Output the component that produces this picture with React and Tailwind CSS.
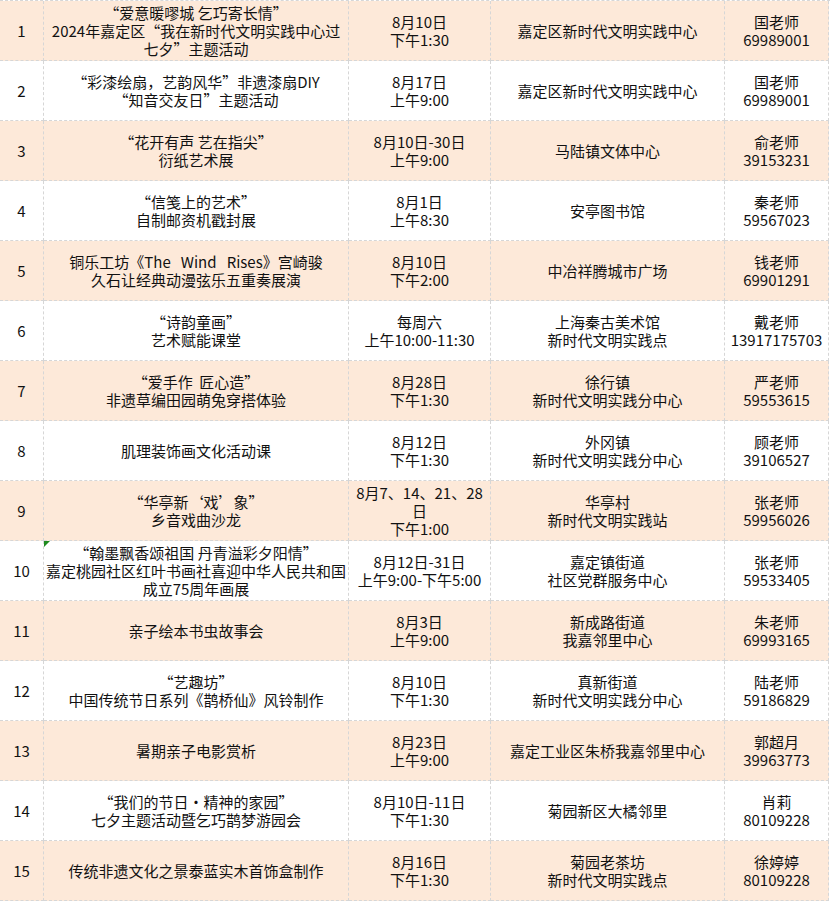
const ROWS = [
  ['1', ['“爱意暖嘐城 乞巧寄长情”', '2024年嘉定区“我在新时代文明实践中心过', '七夕”主题活动'], ['8月10日', '下午1:30'], ['嘉定区新时代文明实践中心'], ['国老师', '69989001']],
  ['2', ['“彩漆绘扇，艺韵风华”非遗漆扇DIY', '“知音交友日”主题活动'], ['8月17日', '上午9:00'], ['嘉定区新时代文明实践中心'], ['国老师', '69989001']],
  ['3', ['“花开有声 艺在指尖”', '衍纸艺术展'], ['8月10日-30日', '上午9:00'], ['马陆镇文体中心'], ['俞老师', '39153231']],
  ['4', ['“信笺上的艺术”', '自制邮资机戳封展'], ['8月1日', '上午8:30'], ['安亭图书馆'], ['秦老师', '59567023']],
  ['5', ['铜乐工坊《The   Wind   Rises》宫崎骏', '久石让经典动漫弦乐五重奏展演'], ['8月10日', '下午2:00'], ['中冶祥腾城市广场'], ['钱老师', '69901291']],
  ['6', ['“诗韵童画”', '艺术赋能课堂'], ['每周六', '上午10:00-11:30'], ['上海秦古美术馆', '新时代文明实践点'], ['戴老师', '13917175703']],
  ['7', ['“爱手作  匠心造”', '非遗草编田园萌兔穿搭体验'], ['8月28日', '下午1:30'], ['徐行镇', '新时代文明实践分中心'], ['严老师', '59553615']],
  ['8', ['肌理装饰画文化活动课'], ['8月12日', '下午1:30'], ['外冈镇', '新时代文明实践分中心'], ['顾老师', '39106527']],
  ['9', ['“华亭新‘戏’象”', '乡音戏曲沙龙'], ['8月7、14、21、28', '日', '下午1:00'], ['华亭村', '新时代文明实践站'], ['张老师', '59956026']],
  ['10', ['“翰墨飘香颂祖国 丹青溢彩夕阳情”', '嘉定桃园社区红叶书画社喜迎中华人民共和国', '成立75周年画展'], ['8月12日-31日', '上午9:00-下午5:00'], ['嘉定镇街道', '社区党群服务中心'], ['张老师', '59533405']],
  ['11', ['亲子绘本书虫故事会'], ['8月3日', '上午9:00'], ['新成路街道', '我嘉邻里中心'], ['朱老师', '69993165']],
  ['12', ['“艺趣坊”', '中国传统节日系列《鹊桥仙》风铃制作'], ['8月10日', '下午1:30'], ['真新街道', '新时代文明实践分中心'], ['陆老师', '59186829']],
  ['13', ['暑期亲子电影赏析'], ['8月23日', '上午9:00'], ['嘉定工业区朱桥我嘉邻里中心'], ['郭超月', '39963773']],
  ['14', ['“我们的节日·精神的家园”', '七夕主题活动暨乞巧鹊梦游园会'], ['8月10日-11日', '下午1:30'], ['菊园新区大橘邻里'], ['肖莉', '80109228']],
  ['15', ['传统非遗文化之景泰蓝实木首饰盒制作'], ['8月16日', '下午1:30'], ['菊园老茶坊', '新时代文明实践点'], ['徐婷婷', '80109228']],
]

function Cell({ lines, peach, mark }) {
  return (
    <div className={`relative h-[60px] flex flex-col items-center justify-center text-center border-r border-b border-dashed border-[#d6d6d6] ${peach ? 'bg-[#fde9d9]' : 'bg-white'}`}>
      {mark && (
        <span className="absolute left-0 top-0 w-0 h-0 border-t-[6px] border-r-[6px] border-t-[#1e8a1e] border-r-transparent" />
      )}
      {lines.map((l, i) => (
        <div key={i} className="whitespace-pre h-[18px] leading-[18px]">{l}</div>
      ))}
    </div>
  )
}

export default function App() {
  return (
    <div className="w-[830px] h-[902px] bg-white text-[15px] text-[#111]" style={{ fontFamily: '"Noto Sans CJK SC", "Noto Sans", sans-serif' }}>
      <div className="grid grid-cols-[44px_305px_142px_234px_104px] border-t border-dashed border-[#d6d6d6]">
        {ROWS.map((r, i) => {
          const peach = i % 2 === 0
          return [
            <Cell key={i + 'a'} lines={[r[0]]} peach={peach} />,
            <Cell key={i + 'b'} lines={r[1]} peach={peach} mark={r[0] === '10'} />,
            <Cell key={i + 'c'} lines={r[2]} peach={peach} />,
            <Cell key={i + 'd'} lines={r[3]} peach={peach} />,
            <Cell key={i + 'e'} lines={r[4]} peach={peach} />,
          ]
        })}
      </div>
    </div>
  )
}
